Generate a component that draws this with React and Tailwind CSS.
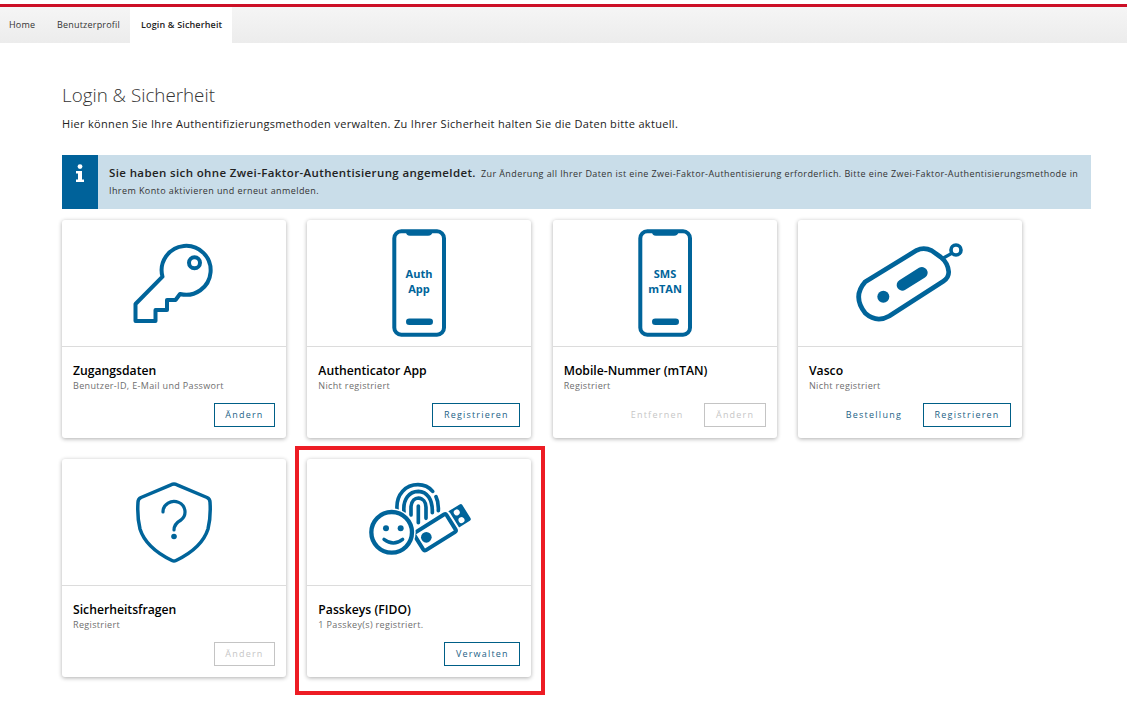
import React from 'react';

const BLUE = '#00649a';

function KeyIcon() {
  return (
    <svg width="224" height="126" viewBox="0 0 224 126" fill="none" stroke={BLUE} strokeWidth="4" strokeLinejoin="round">
      <path d="M100.5 56.7 A24.5 24.5 0 1 1 118 74 L113.5 80 H105 V90 H93.5 V101 H73.5 V84 Z" />
      <circle cx="132.5" cy="42.7" r="5.5" />
    </svg>
  );
}

function PhoneIcon({ top, bottom }) {
  return (
    <svg width="224" height="126" viewBox="0 0 224 126" fill="none">
      <rect x="87.3" y="11.3" width="49.7" height="103.4" rx="7" stroke={BLUE} strokeWidth="4" />
      <path d="M99 11 H125.5 V12 Q125 15.7 121 15.7 H103 Q99 15.7 99 12 Z" fill={BLUE} />
      <rect x="99" y="98.5" width="27" height="6.6" rx="3.3" fill={BLUE} />
      <text x="112" y="58" textAnchor="middle" fill={BLUE} fontSize="11" fontWeight="700" fontFamily="'Open Sans', sans-serif">{top}</text>
      <text x="112" y="73" textAnchor="middle" fill={BLUE} fontSize="11" fontWeight="700" fontFamily="'Open Sans', sans-serif">{bottom}</text>
    </svg>
  );
}

function VascoIcon() {
  return (
    <svg width="224" height="126" viewBox="0 0 224 126" fill="none">
      <g transform="translate(52 15) scale(0.3333)" stroke={BLUE}>
        <path d="M46 140 L200 46 Q222 35 245 47 L272 66 Q294 84 296 110 Q297 128 280 139 L118 243 Q80 265 46 235 Q6 185 46 140 Z" strokeWidth="14" strokeLinejoin="round" />
        <path d="M275 72 L305 55" strokeWidth="10" />
        <circle cx="318" cy="45" r="15" strokeWidth="11" />
        <path d="M157 150 L216 113" strokeWidth="34" strokeLinecap="round" />
        <circle cx="100" cy="185" r="18" fill={BLUE} stroke="none" />
      </g>
    </svg>
  );
}

function ShieldIcon() {
  return (
    <svg width="224" height="126" viewBox="0 0 224 126" fill="none" stroke={BLUE} strokeLinecap="round" strokeLinejoin="round">
      <path d="M112 25 Q113.5 25 115 25.8 L145 38.5 Q148 40 148 43 Q149 58 146 70 Q140 89 114 101.5 Q112 102.5 110 101.5 Q84 89 78 70 Q75 58 76 43 Q76 40 79 38.5 L109 25.8 Q110.5 25 112 25 Z" strokeWidth="3.5" />
      <path d="M101 53 A11 10.5 0 1 1 119 61 Q112 65 112 71" strokeWidth="3.2" />
      <circle cx="112" cy="77.5" r="2.8" fill={BLUE} stroke="none" />
    </svg>
  );
}

function PasskeyIcon() {
  return (
    <svg width="224" height="126" viewBox="0 0 224 126" fill="none">
      <g transform="translate(43 11) scale(0.3333)" stroke={BLUE} strokeLinecap="round">
        {/* fingerprint */}
        <path d="M141 118 C138 72 168 44 204 44 C222 44 238 52 248 64" strokeWidth="11" />
        <path d="M258 80 C264 92 266 104 265 122" strokeWidth="11" />
        <path d="M162 125 C158 88 178 64 205 64 C232 65 248 88 247 128" strokeWidth="11" />
        <path d="M183 135 L183 110 C185 92 195 84 205 84 C219 85 228 97 228 112 L228 145" strokeWidth="11" />
        <path d="M205 108 L205 158" strokeWidth="11" />
        {/* usb stick */}
        <g transform="rotate(-32 255 187)">
          <rect x="318" y="155" width="50" height="58" rx="6" fill={BLUE} stroke="none" />
          <circle cx="342" cy="171" r="9" fill="white" stroke="none" />
          <circle cx="342" cy="198" r="9" fill="white" stroke="none" />
          <rect x="198" y="156" width="114" height="62" rx="6" fill="white" stroke="white" strokeWidth="24" />
          <rect x="198" y="156" width="114" height="62" rx="6" fill="white" strokeWidth="12" />
        </g>
        <circle cx="229" cy="202" r="16" fill={BLUE} stroke="none" />
        {/* smiley */}
        <circle cx="125" cy="187" r="72" fill="white" stroke="none" />
        <circle cx="125" cy="187" r="61" fill="white" strokeWidth="13" />
        <circle cx="108" cy="175" r="9" fill={BLUE} stroke="none" />
        <circle cx="152" cy="175" r="9" fill={BLUE} stroke="none" />
        <path d="M102 208 Q130 230 158 208" strokeWidth="10" />
      </g>
    </svg>
  );
}

function Btn({ children, disabled, plain }) {
  const look = disabled ? 'text-[#c6c6c6]' : 'text-[#1d5f86]';
  if (plain) {
    return <button className={`h-6 text-[9px] tracking-[1.25px] ${look}`}>{children}</button>;
  }
  const border = disabled ? 'border-[#c4c4c4]' : 'border-[#005f87]';
  return (
    <button className={`h-6 px-[10.5px] border text-[9px] tracking-[1.2px] ${border} ${look}`}>{children}</button>
  );
}

function Card({ icon, title, sub, children }) {
  return (
    <div className="w-[224px] rounded-[3px] bg-white shadow-[0_1px_4px_rgba(0,0,0,0.32)]">
      <div className="h-[127px] border-b border-[#dcdcdc]">{icon}</div>
      <div className="px-[11px] pt-[16px] pb-[11px]">
        <div className="text-[12.2px] leading-4 font-semibold text-black">{title}</div>
        <div className="text-[9px] leading-[13px] tracking-[0.35px] text-[#6e6e6e]">{sub}</div>
        <div className="mt-[11px] flex justify-end items-center gap-[21px]">{children}</div>
      </div>
    </div>
  );
}

export default function App() {
  return (
    <div className="min-h-[726px] bg-white font-['Open_Sans',sans-serif] pt-1">
      <div className="h-[3px] bg-[#cc0f26]" />
      <nav className="flex h-9 bg-gradient-to-b from-[#f5f5f5] to-[#ececec] text-[9px] tracking-[0.2px] text-[#333]">
        <a className="px-[9px] leading-9 w-[45px]">Home</a>
        <a className="pl-[12px] leading-9 w-[85px]">Benutzerprofil</a>
        <a className="px-[11px] leading-9 w-[102px] bg-white text-[#222] font-semibold tracking-[0.15px] whitespace-nowrap">Login &amp; Sicherheit</a>
      </nav>

      <main className="pl-[62px] pr-[36px]">
        <h1 className="mt-[40px] text-[18.8px] leading-6 font-light text-[#333]">Login &amp; Sicherheit</h1>
        <p className="mt-[9px] text-[11px] leading-4 tracking-[0.315px] text-[#222]">
          Hier können Sie Ihre Authentifizierungsmethoden verwalten. Zu Ihrer Sicherheit halten Sie die Daten bitte aktuell.
        </p>

        <div className="mt-[23px] flex h-[54px] bg-[#c9dde9]">
          <div className="flex w-9 shrink-0 justify-center bg-[#00629a] pt-[9px]">
            <svg width="10" height="18" viewBox="0 0 10 18" fill="white">
              <circle cx="5" cy="2.6" r="2.4" />
              <path d="M1 7 H7 V15.5 H9 V18 H1 V15.5 H3 V9.5 H1 Z" />
            </svg>
          </div>
          <div className="pl-[11px] pr-[10px] pt-[9px] text-[9px] leading-[17px] tracking-[0.41px] text-[#333]">
            <span className="mr-[5px] text-[11.5px] font-semibold tracking-[0.38px] text-[#222]">Sie haben sich ohne Zwei-Faktor-Authentisierung angemeldet.</span>
            Zur Änderung all Ihrer Daten ist eine Zwei-Faktor-Authentisierung erforderlich. Bitte eine Zwei-Faktor-Authentisierungsmethode in Ihrem Konto aktivieren und erneut anmelden.
          </div>
        </div>

        <div className="mt-[11px] grid grid-cols-[repeat(4,224px)] gap-x-[21.33px] gap-y-[21px]">
          <Card icon={<KeyIcon />} title="Zugangsdaten" sub="Benutzer-ID, E-Mail und Passwort">
            <Btn>Ändern</Btn>
          </Card>
          <Card icon={<PhoneIcon top="Auth" bottom="App" />} title="Authenticator App" sub="Nicht registriert">
            <Btn>Registrieren</Btn>
          </Card>
          <Card icon={<PhoneIcon top="SMS" bottom="mTAN" />} title="Mobile-Nummer (mTAN)" sub="Registriert">
            <Btn plain disabled>Entfernen</Btn>
            <Btn disabled>Ändern</Btn>
          </Card>
          <Card icon={<VascoIcon />} title="Vasco" sub="Nicht registriert">
            <Btn plain>Bestellung</Btn>
            <Btn>Registrieren</Btn>
          </Card>
          <Card icon={<ShieldIcon />} title="Sicherheitsfragen" sub="Registriert">
            <Btn disabled>Ändern</Btn>
          </Card>
          <div className="relative">
            <Card icon={<PasskeyIcon />} title="Passkeys (FIDO)" sub="1 Passkey(s) registriert.">
              <Btn>Verwalten</Btn>
            </Card>
            {/* rote Markierung liegt über der Karte */}
            <div className="absolute -left-3 -top-[13px] -right-[14px] -bottom-[18px] border-4 border-[#ed1c24]" />
          </div>
        </div>
      </main>
    </div>
  );
}
